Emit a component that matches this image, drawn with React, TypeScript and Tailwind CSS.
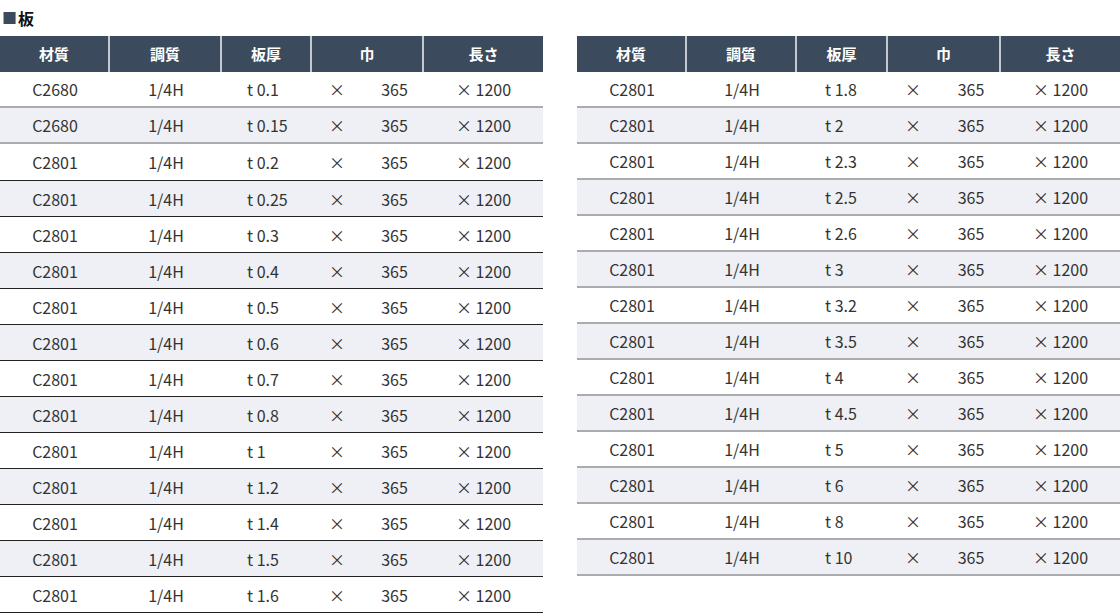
const leftRows = [
  ["C2680", "0.1"],
  ["C2680", "0.15"],
  ["C2801", "0.2"],
  ["C2801", "0.25"],
  ["C2801", "0.3"],
  ["C2801", "0.4"],
  ["C2801", "0.5"],
  ["C2801", "0.6"],
  ["C2801", "0.7"],
  ["C2801", "0.8"],
  ["C2801", "1"],
  ["C2801", "1.2"],
  ["C2801", "1.4"],
  ["C2801", "1.5"],
  ["C2801", "1.6"],
]

const rightRows = [
  "1.8", "2", "2.3", "2.5", "2.6", "3", "3.2", "3.5", "4", "4.5", "5", "6", "8", "10",
].map((t) => ["C2801", t])

const headers = ["材質", "調質", "板厚", "巾", "長さ"]

type TableProps = {
  rows: string[][]
  cols: string
  thickPad: string
  darkFrom: number
}

function PlateTable({ rows, cols, thickPad, darkFrom }: TableProps) {
  return (
    <div className="w-[543px]">
      {/* header */}
      <div className={`grid ${cols} h-[36px] bg-[#3b4b5d] text-white font-bold text-[15px]`}>
        {headers.map((h, i) => (
          <div
            key={h}
            className={`flex items-center justify-center ${
              i < headers.length - 1 ? "border-r-2 border-[#c3c9d0]" : ""
            }`}
          >
            {h}
          </div>
        ))}
      </div>

      {rows.map(([mat, t], i) => {
        const dark = i >= darkFrom
        return (
          <div
            key={i}
            className={`grid ${cols} ${i === darkFrom ? "h-[37px]" : "h-[36px]"} items-center text-[16px] text-[#333] ${
              i % 2 === 1 ? "bg-[#eef0f5]" : "bg-white"
            } ${dark ? "border-b border-[#222]" : "border-b-2 border-[#a9abae]"}`}
          >
            <div className="text-center">{mat}</div>
            <div className="text-center">1/4H</div>
            <div className={thickPad}>t {t}</div>
            <div className="flex">
              <span className="w-[50px] text-center">×</span>
              <span className="flex-1 text-center pl-[3px]">365</span>
            </div>
            <div className="text-center">× 1200</div>
          </div>
        )
      })}
    </div>
  )
}

export default function App() {
  return (
    <div
      className="w-[1120px] h-[614px] bg-white overflow-hidden"
      style={{ fontFamily: '"Noto Sans CJK JP", "Noto Sans", sans-serif' }}
    >
      <div className="h-[36px] flex items-center pl-[2px] text-[16px] font-bold text-[#111]">
        <span className="text-[#3b4b5d] text-[15px] mr-[1px]">■</span>板
      </div>
      <div className="flex gap-[34px]">
        <PlateTable
          rows={leftRows}
          cols="grid-cols-[110px_112px_90px_112px_119px]"
          thickPad="pl-[25px]"
          darkFrom={2}
        />
        <PlateTable
          rows={rightRows}
          cols="grid-cols-[110px_110px_91px_113px_119px]"
          thickPad="pl-[28px]"
          darkFrom={99}
        />
      </div>
    </div>
  )
}
